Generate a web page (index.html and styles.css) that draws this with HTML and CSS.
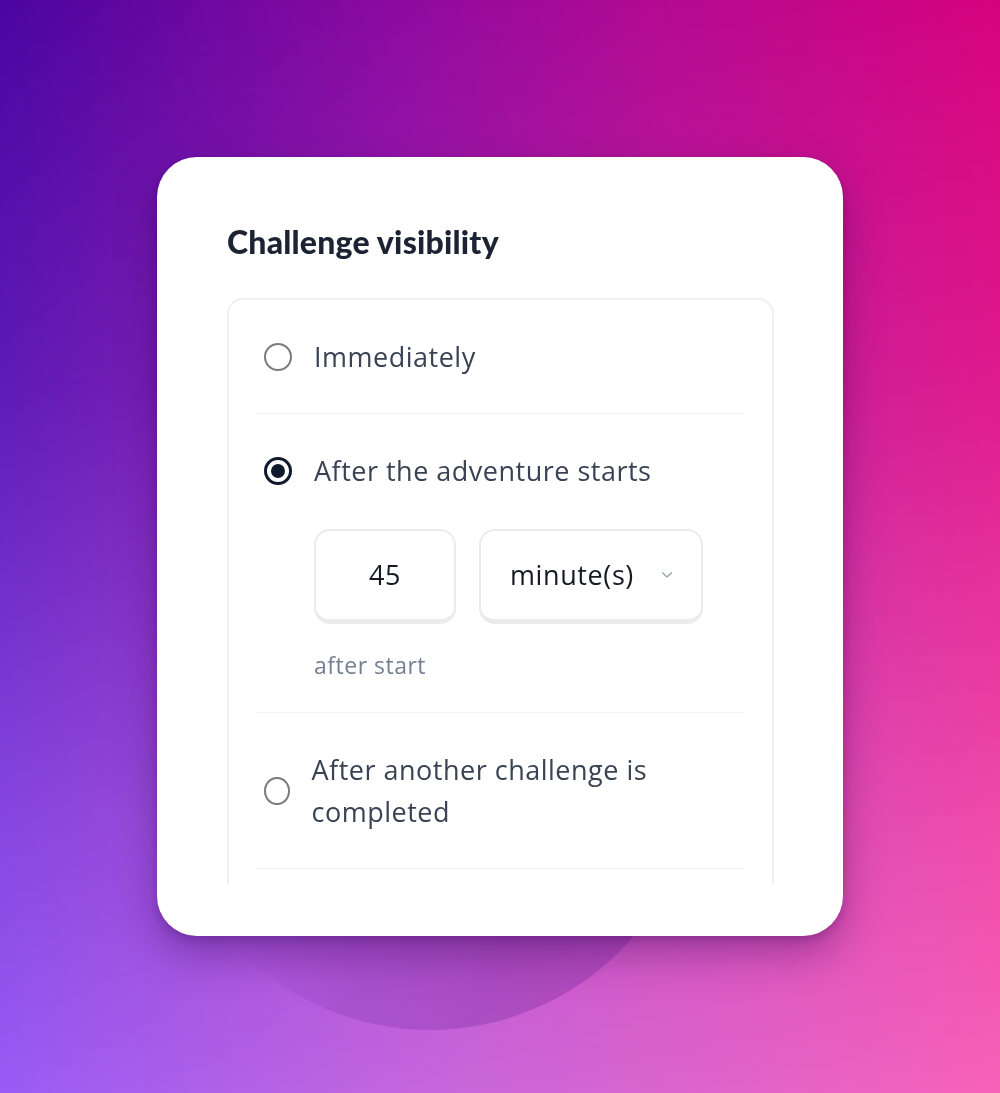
FILE: index.html
```html
<!DOCTYPE html>
<html lang="en">
<head>
  <meta charset="UTF-8">
  <meta name="viewport" content="width=device-width, initial-scale=1.0">
  <title>Challenge visibility</title>
  <link rel="stylesheet" href="styles.css">
</head>
<body>
  <div class="card">
    <h2 class="card-title">Challenge visibility</h2>
    <div class="card-body">
      <div class="options">
        <div class="option">
          <span class="radio"></span>
          <span class="option-label">Immediately</span>
        </div>
        <div class="option option-open">
          <div class="option-head">
            <span class="radio checked"></span>
            <span class="option-label">After the adventure starts</span>
          </div>
          <div class="delay">
            <div class="field field-number">45</div>
            <div class="field field-select">
              <span>minute(s)</span>
              <svg class="chevron" width="12" height="8" viewBox="0 0 12 8">
                <path d="M1.5 1.8 L6 6 L10.5 1.8" fill="none" stroke="#9aa3b0" stroke-width="1.4" stroke-linecap="round" stroke-linejoin="round"/>
              </svg>
            </div>
          </div>
          <p class="hint">after start</p>
        </div>
        <div class="option">
          <span class="radio"></span>
          <span class="option-label">After another challenge is completed</span>
        </div>
        <div class="option option-empty"></div>
      </div>
    </div>
  </div>
</body>
</html>
```

FILE: styles.css
```css
* {
  box-sizing: border-box;
  margin: 0;
  padding: 0;
}
body {
  font-family: 'Open Sans', 'Noto Sans', Arial, sans-serif;
  height: 100vh;
  display: flex;
  justify-content: center;
  align-items: center;
  background: linear-gradient(90deg, #9a5cf5 0%, #c867dc 45%, #f862b9 100%);
  overflow: hidden;
}
/* top colours fade out towards the bottom of the page */
body::before {
  content: "";
  position: fixed;
  inset: 0;
  z-index: -2;
  background: linear-gradient(90deg, #4a05a0 0%, #8d0aa0 40%, #b20a92 65%, #d6037e 100%);
  -webkit-mask-image: linear-gradient(to bottom, #000 0%, rgba(0,0,0,0.75) 35%, rgba(0,0,0,0.25) 75%, transparent 100%);
  mask-image: linear-gradient(to bottom, #000 0%, rgba(0,0,0,0.75) 35%, rgba(0,0,0,0.25) 75%, transparent 100%);
}
/* darker round blob tucked behind the card, only its lower right edge shows */
body::after {
  content: "";
  position: fixed;
  left: 162px;
  top: 494px;
  width: 536px;
  height: 536px;
  border-radius: 50%;
  z-index: -1;
  background: linear-gradient(105deg, rgba(70, 10, 130, 0) 28%, rgba(70, 10, 130, 0.14) 48%, rgba(70, 10, 130, 0.22) 68%);
}
.card {
  width: 686px;
  height: 779px;
  background: #fff;
  border-radius: 40px;
  padding: 66px 69px 52px 70px;
  display: flex;
  flex-direction: column;
  box-shadow: 0 18px 40px rgba(45, 0, 80, 0.35), 0 4px 10px rgba(45, 0, 80, 0.2);
}
.card-title {
  font-family: Lato, 'Open Sans', sans-serif;
  font-weight: 900;
  font-size: 32px;
  line-height: 38px;
  letter-spacing: 0.2px;
  color: #1c2333;
  margin-bottom: 37px;
}
.card-body {
  flex: 1;
  overflow: hidden;
}
.options {
  border: 2px solid #f0f0f2;
  border-radius: 16px;
  padding: 0 28px;
  box-shadow: 0 2px 6px rgba(0, 0, 0, 0.03);
}
.option {
  display: flex;
  align-items: center;
  gap: 22px;
  padding: 36px 0 35px 7px;
  border-bottom: 1.5px solid #f1f2f4;
  font-size: 27px;
  line-height: 42px;
  color: #3a4354;
  letter-spacing: 0.5px;
}
.option-open {
  display: block;
  padding-bottom: 30px;
}
.option-head {
  display: flex;
  align-items: center;
  gap: 22px;
}
.option-empty {
  height: 120px;
  border-bottom: none;
}
.radio {
  width: 28px;
  height: 28px;
  border-radius: 50%;
  border: 2px solid #7b7b7f;
  background: #fff;
  position: relative;
}
.radio.checked {
  border: 3px solid #111a2c;
  flex-shrink: 0;
}
.radio.checked::after {
  content: "";
  position: absolute;
  inset: 4px;
  border-radius: 50%;
  background: #111a2c;
}
.delay {
  display: flex;
  gap: 23px;
  margin: 37px 0 0 50px;
}
.field {
  height: 95px;
  border: 2px solid #ebebed;
  border-bottom-width: 5px;
  border-radius: 16px;
  display: flex;
  align-items: center;
  font-size: 27px;
  color: #151a24;
  letter-spacing: 0.6px;
}
.field-number {
  width: 142px;
  justify-content: center;
}
.field-select {
  width: 224px;
  justify-content: space-between;
  padding: 0 28px 0 29px;
}
.hint {
  margin: 24px 0 0 50px;
  font-size: 23px;
  line-height: 34px;
  letter-spacing: 0.5px;
  color: #737f93;
}
```
